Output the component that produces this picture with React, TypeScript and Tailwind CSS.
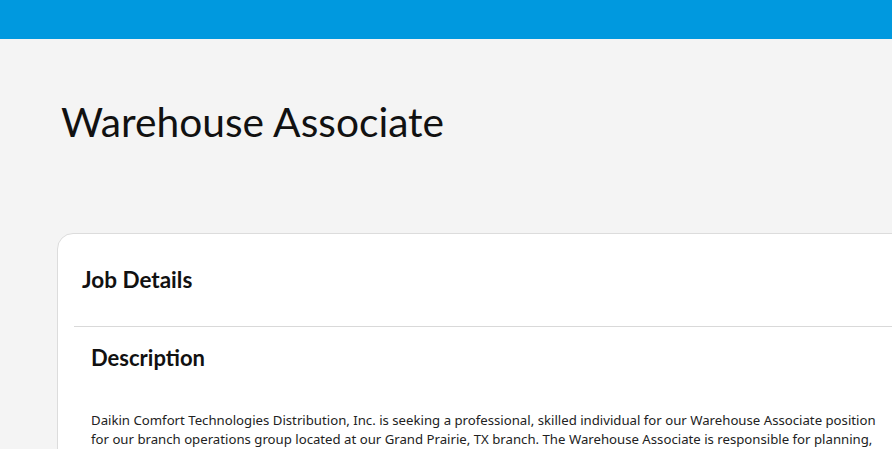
export default function App() {
  return (
    <div className="h-[449px] w-[892px] overflow-hidden bg-[#f4f4f4]">
      <div className="h-[39px] bg-[#0099df]" />

      <div className="pl-[57px]">
        <h1 className="pl-[4px] pt-[59px] font-['Lato',sans-serif] text-[40.7px] leading-[48px] text-[#111]">
          Warehouse Associate
        </h1>

        <div className="mt-[87px] w-[900px] rounded-tl-[16px] border border-[#dcdcdc] bg-white pl-[16px]">
          <div className="flex h-[92px] items-center pl-[8px] font-['Lato',sans-serif] text-[22.5px] font-bold text-[#111]">
            Job Details
          </div>
          <div className="border-t border-[#d9d9d9] pl-[17px]">
            <h2 className="pt-[17px] font-['Lato',sans-serif] text-[22px] leading-[28px] font-bold text-[#111]">
              Description
            </h2>
            <p className="mt-[39px] w-[798px] font-['Noto_Sans',sans-serif] text-[13.2px] leading-[19px] text-[#222]">
              Daikin Comfort Technologies Distribution, Inc. is seeking a professional, skilled individual for our
              Warehouse Associate position for our branch operations group located at our Grand Prairie, TX branch. The
              Warehouse Associate is responsible for planning, organizing and coordinating the flow of materials.
            </p>
          </div>
        </div>
      </div>
    </div>
  );
}
